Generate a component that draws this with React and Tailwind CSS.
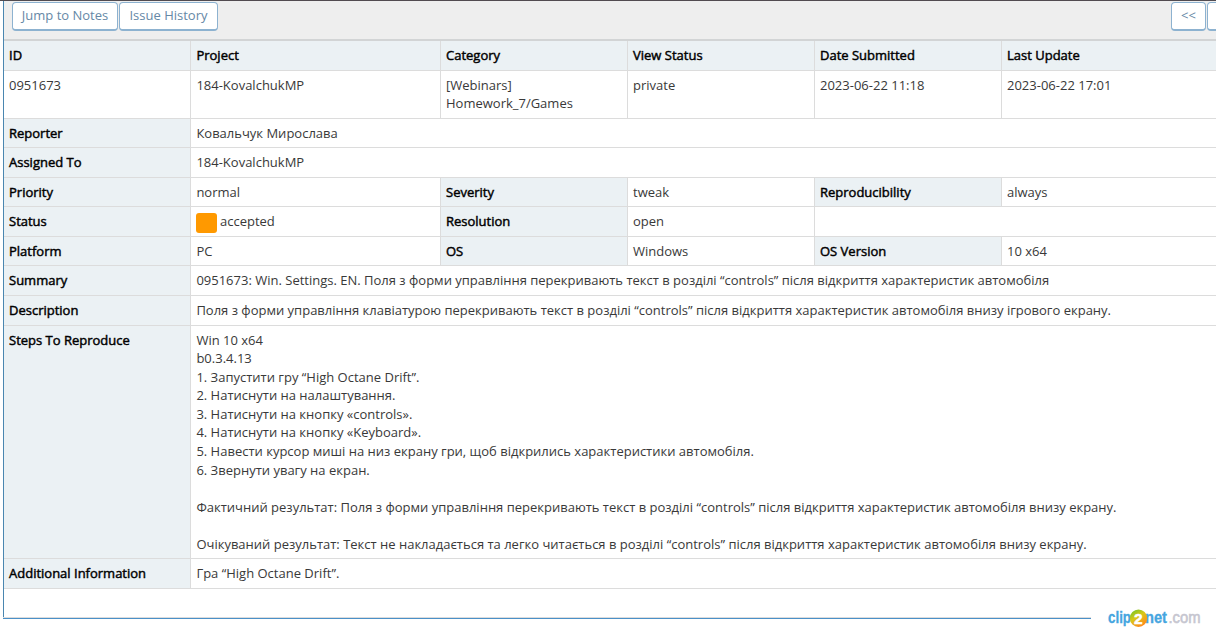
import React from 'react';

const label = 'bg-[#ebf1f4] text-black [-webkit-text-stroke:0.45px_#000]';

function Cell({ head, className = '', children }) {
  return (
    <div className={`border-b border-[#dcdcdc] pr-[5px] pt-[4.6px] whitespace-pre-line ${head ? label : 'bg-white'} ${className || 'pl-[5px]'}`}>
      {children}
    </div>
  );
}

const L = 'border-l pl-[5.4px]';
const B = 'border-l pl-[5px]';

function Button({ className = '', children }) {
  return (
    <button className={`box-border h-[29px] shrink-0 rounded-[4px] border border-b-2 border-[#8db2d0] bg-white pb-[3px] text-[13px] leading-[18px] text-[#6688a6] ${className}`}>
      {children}
    </button>
  );
}

const steps = `Win 10 x64
b0.3.4.13
1. Запустити гру “High Octane Drift”.
2. Натиснути на налаштування.
3. Натиснути на кнопку «controls».
4. Натиснути на кнопку «Keyboard».
5. Навести курсор миші на низ екрану гри, щоб відкрились характеристики автомобіля.
6. Звернути увагу на екран.

Фактичний результат: Поля з форми управління перекривають текст в розділі “controls” після відкриття характеристик автомобіля внизу екрану.

Очікуваний результат: Текст не накладається та легко читається в розділі “controls” після відкриття характеристик автомобіля внизу екрану.`;

function Logo() {
  return (
    <svg width="96" height="22" viewBox="0 0 96 22" className="block">
      <defs>
        <linearGradient id="ball" x1="0" y1="0" x2="0.6" y2="1">
          <stop offset="0" stopColor="#5fc528" />
          <stop offset="0.5" stopColor="#d9c817" />
          <stop offset="1" stopColor="#ff8a1c" />
        </linearGradient>
      </defs>
      <g fontFamily="Liberation Sans, sans-serif">
        <text x="1" y="16" fontSize="16" fontWeight="700" fill="#45a5e0" stroke="#45a5e0" strokeWidth="0.3" textLength="23" lengthAdjust="spacingAndGlyphs">clip</text>
        <text x="38" y="16" fontSize="16" fontWeight="700" fill="#45a5e0" stroke="#45a5e0" strokeWidth="0.3" textLength="22" lengthAdjust="spacingAndGlyphs">net</text>
        <text x="61.5" y="16" fontSize="16" fill="#c6c6d0" stroke="#c6c6d0" strokeWidth="0.6" textLength="32" lengthAdjust="spacingAndGlyphs">.com</text>
        <circle cx="31.5" cy="11.2" r="8.7" fill="url(#ball)" />
        <text x="27" y="16.5" fontSize="15.5" fontWeight="700" fill="#fff" stroke="#fff" strokeWidth="0.5">2</text>
      </g>
    </svg>
  );
}

export default function App() {
  return (
    <div className="flex h-[629px] w-[1216px] flex-col overflow-hidden bg-white font-['Open_Sans','Noto_Sans',sans-serif] text-[13px] leading-[18.57px] text-[#393939]">
      <div className="h-px shrink-0 bg-[#514b50]" />
      <div className="ml-[3px] h-[616px] shrink-0 border-l border-[#4a86b0]">
        <div className="flex h-[40px] items-start gap-px overflow-hidden border-b-2 border-[#d2d4d5] bg-[#eeeeee] pt-px pl-[8px]">
          <Button className="w-[106px]">Jump to Notes</Button>
          <Button className="w-[99px]">Issue History</Button>
          <div className="grow" />
          <Button className="w-[35px]">&lt;&lt;</Button>
          <Button className="-mr-[26px] w-[35px]" />
        </div>
        <div className="grid grid-cols-[186px_250px_187px_187px_187px_215px] grid-rows-[30px_48px_29px_30px_29px_30px_29px_30px_30px_233px_30px]">
          <Cell head>ID</Cell>
          <Cell head className={L}>Project</Cell>
          <Cell head className={B}>Category</Cell>
          <Cell head className={B}>View Status</Cell>
          <Cell head className={B}>Date Submitted</Cell>
          <Cell head className={B}>Last Update</Cell>

          <Cell>0951673</Cell>
          <Cell className={L}>184-KovalchukMP</Cell>
          <Cell className={B}>[Webinars] Homework_7/Games</Cell>
          <Cell className={B}>private</Cell>
          <Cell className={B}>2023-06-22 11:18</Cell>
          <Cell className={B}>2023-06-22 17:01</Cell>

          <Cell head>Reporter</Cell>
          <Cell className={`${L} col-span-5`}>Ковальчук Мирослава</Cell>

          <Cell head>Assigned To</Cell>
          <Cell className={`${L} col-span-5`}>184-KovalchukMP</Cell>

          <Cell head>Priority</Cell>
          <Cell className={L}>normal</Cell>
          <Cell head className={B}>Severity</Cell>
          <Cell className={B}>tweak</Cell>
          <Cell head className={B}>Reproducibility</Cell>
          <Cell className={B}>always</Cell>

          <Cell head>Status</Cell>
          <Cell className={`${B} flex items-start gap-[3px]`}>
            <span className="mt-[1.4px] h-[20px] w-[21px] rounded-[3px] bg-[#ff9900]" />
            <span>accepted</span>
          </Cell>
          <Cell head className={B}>Resolution</Cell>
          <Cell className={B}>open</Cell>
          <Cell className="col-span-2 border-l" />

          <Cell head>Platform</Cell>
          <Cell className={L}>PC</Cell>
          <Cell head className={B}>OS</Cell>
          <Cell className={B}>Windows</Cell>
          <Cell head className={B}>OS Version</Cell>
          <Cell className={B}>10 x64</Cell>

          <Cell head>Summary</Cell>
          <Cell className={`${L} col-span-5`}>0951673: Win. Settings. EN. Поля з форми управління перекривають текст в розділі “controls” після відкриття характеристик автомобіля</Cell>

          <Cell head>Description</Cell>
          <Cell className={`${L} col-span-5`}>Поля з форми управління клавіатурою перекривають текст в розділі “controls” після відкриття характеристик автомобіля внизу ігрового екрану.</Cell>

          <Cell head>Steps To Reproduce</Cell>
          <Cell className={`${L} col-span-5`}>{steps}</Cell>

          <Cell head>Additional Information</Cell>
          <Cell className={`${L} col-span-5`}>Гра “High Octane Drift”.</Cell>
        </div>
      </div>
      <div className="flex h-[12px] shrink-0 items-start pl-[3px]">
        <div className="h-[2px] w-[1088px] border-t border-b border-t-[#dcdcdc] border-b-[#4a90c8]" />
        <div className="-mt-[10px] ml-[16px]">
          <Logo />
        </div>
      </div>
    </div>
  );
}
